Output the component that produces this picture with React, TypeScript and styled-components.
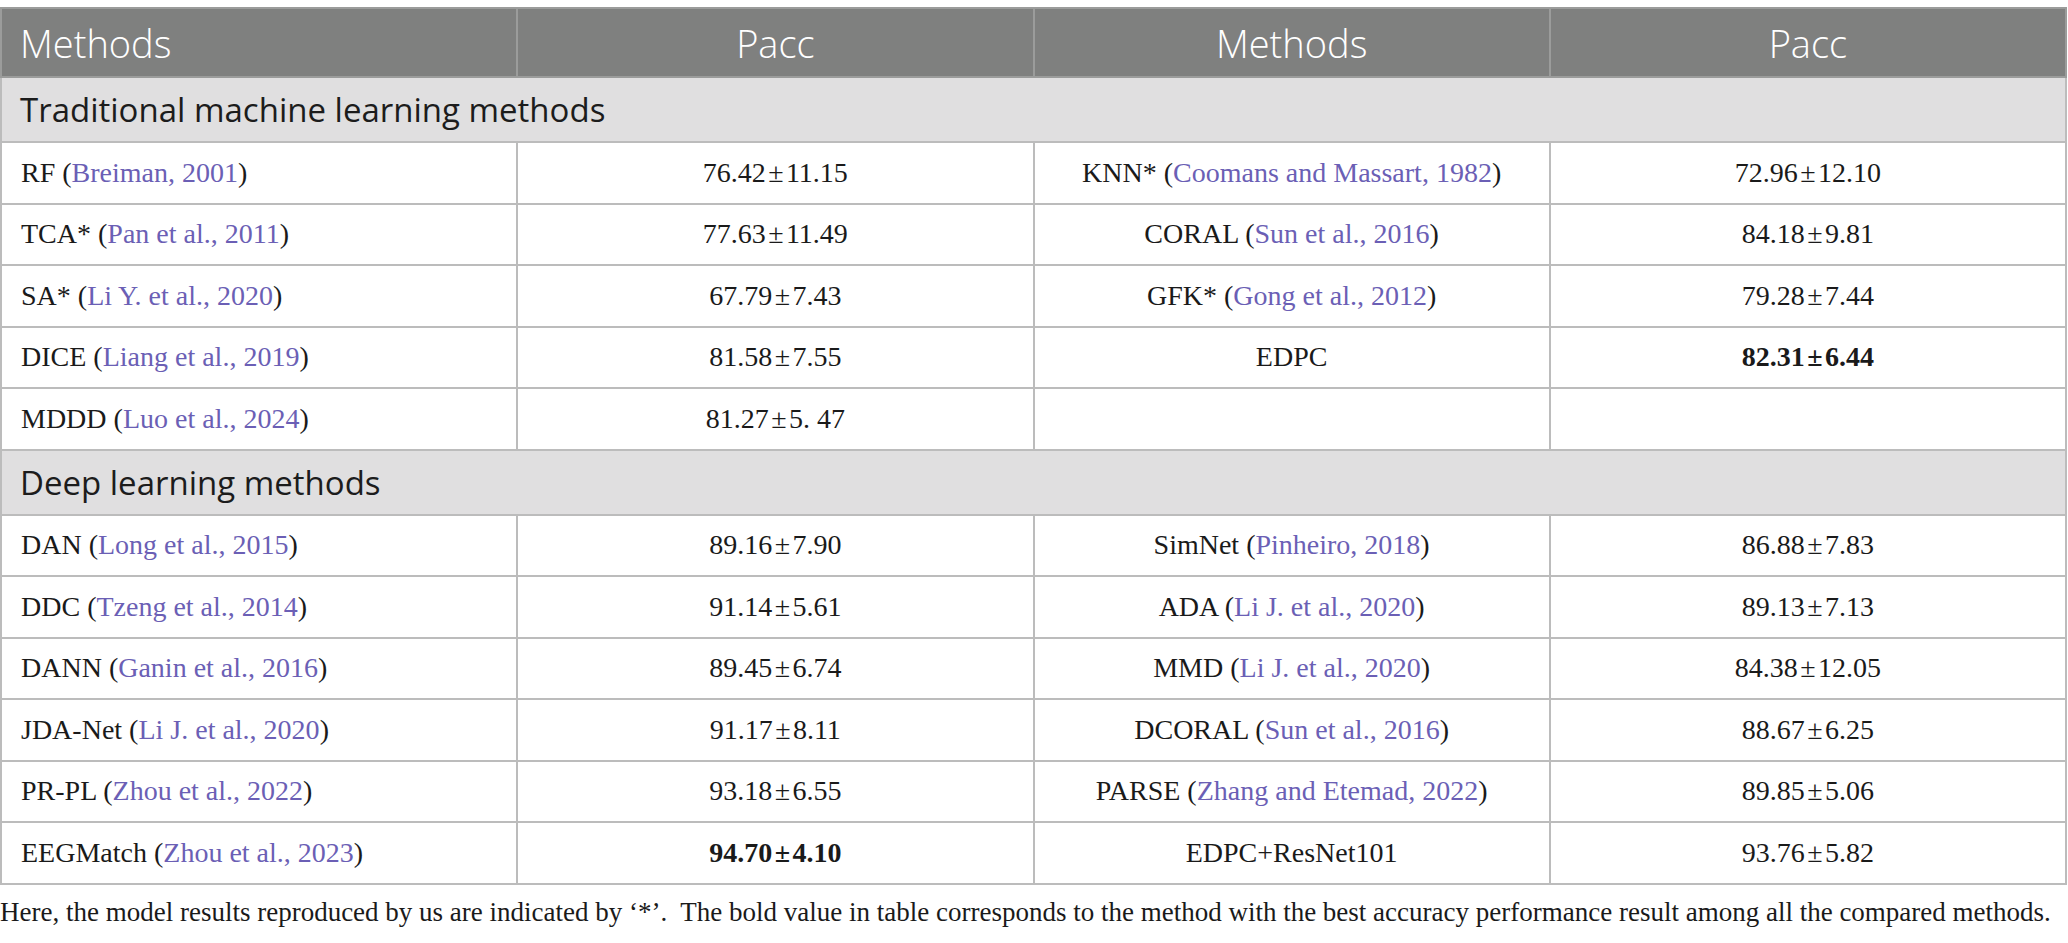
import React from 'react'
import styled, { createGlobalStyle } from 'styled-components'

const GlobalStyle = createGlobalStyle`
  body {
    margin: 0;
    background: #ffffff;
  }
`

const Page = styled.div`
  padding-top: 7px;
  width: 2068px;
`

const Table = styled.table`
  width: 2067px;
  border-collapse: collapse;
  table-layout: fixed;
`

const HeadCell = styled.th<{ $left?: boolean }>`
  height: 67px;
  padding: 0 18px;
  background: #7f807f;
  border: 2px solid #9b9c9b;
  color: #ffffff;
  font-family: 'Open Sans', 'Noto Sans', sans-serif;
  font-weight: 300;
  font-size: 38px;
  text-align: ${(p) => (p.$left ? 'left' : 'center')};
`

const SectionCell = styled.td`
  height: 63px;
  padding: 0 18px;
  background: #e0dfe0;
  border: 2px solid #bcbcbc;
  color: #1c1c1c;
  font-family: 'Open Sans', 'Noto Sans', sans-serif;
  font-size: 33px;
  text-align: left;
`

const Cell = styled.td<{ $left?: boolean; $bold?: boolean }>`
  height: 59.5px;
  padding: 0 19px;
  border: 2px solid #bcbcbc;
  color: #1a1a1a;
  font-family: 'Liberation Serif', serif;
  font-size: 28px;
  font-weight: ${(p) => (p.$bold ? 700 : 400)};
  text-align: ${(p) => (p.$left ? 'left' : 'center')};
  white-space: nowrap;
`

const Ref = styled.span`
  color: #6b5fb5;
`

const Note = styled.p`
  margin: 12px 0 0;
  font-family: 'Liberation Serif', serif;
  font-size: 27px;
  color: #1a1a1a;
  white-space: nowrap;
`

type Method = { name: string; ref?: string }
type Row = { a?: Method; aVal?: string; aBold?: boolean; b?: Method; bVal?: string; bBold?: boolean }

const pm = (x: string, y: string) => `${x}\u200a±\u200a${y}`

const traditional: Row[] = [
  { a: { name: 'RF', ref: 'Breiman, 2001' }, aVal: pm('76.42', '11.15'), b: { name: 'KNN*', ref: 'Coomans and Massart, 1982' }, bVal: pm('72.96', '12.10') },
  { a: { name: 'TCA*', ref: 'Pan et al., 2011' }, aVal: pm('77.63', '11.49'), b: { name: 'CORAL', ref: 'Sun et al., 2016' }, bVal: pm('84.18', '9.81') },
  { a: { name: 'SA*', ref: 'Li Y. et al., 2020' }, aVal: pm('67.79', '7.43'), b: { name: 'GFK*', ref: 'Gong et al., 2012' }, bVal: pm('79.28', '7.44') },
  { a: { name: 'DICE', ref: 'Liang et al., 2019' }, aVal: pm('81.58', '7.55'), b: { name: 'EDPC' }, bVal: pm('82.31', '6.44'), bBold: true },
  { a: { name: 'MDDD', ref: 'Luo et al., 2024' }, aVal: pm('81.27', '5. 47') },
]

const deep: Row[] = [
  { a: { name: 'DAN', ref: 'Long et al., 2015' }, aVal: pm('89.16', '7.90'), b: { name: 'SimNet', ref: 'Pinheiro, 2018' }, bVal: pm('86.88', '7.83') },
  { a: { name: 'DDC', ref: 'Tzeng et al., 2014' }, aVal: pm('91.14', '5.61'), b: { name: 'ADA', ref: 'Li J. et al., 2020' }, bVal: pm('89.13', '7.13') },
  { a: { name: 'DANN', ref: 'Ganin et al., 2016' }, aVal: pm('89.45', '6.74'), b: { name: 'MMD', ref: 'Li J. et al., 2020' }, bVal: pm('84.38', '12.05') },
  { a: { name: 'JDA-Net', ref: 'Li J. et al., 2020' }, aVal: pm('91.17', '8.11'), b: { name: 'DCORAL', ref: 'Sun et al., 2016' }, bVal: pm('88.67', '6.25') },
  { a: { name: 'PR-PL', ref: 'Zhou et al., 2022' }, aVal: pm('93.18', '6.55'), b: { name: 'PARSE', ref: 'Zhang and Etemad, 2022' }, bVal: pm('89.85', '5.06') },
  { a: { name: 'EEGMatch', ref: 'Zhou et al., 2023' }, aVal: pm('94.70', '4.10'), aBold: true, b: { name: 'EDPC+ResNet101' }, bVal: pm('93.76', '5.82') },
]

const MethodText = ({ m }: { m?: Method }) => {
  if (!m) return null
  return (
    <>
      {m.name}
      {m.ref && (
        <>
          {' ('}
          <Ref>{m.ref}</Ref>
          {')'}
        </>
      )}
    </>
  )
}

const DataRow = ({ row }: { row: Row }) => (
  <tr>
    <Cell $left>
      <MethodText m={row.a} />
    </Cell>
    <Cell $bold={row.aBold}>{row.aVal}</Cell>
    <Cell>
      <MethodText m={row.b} />
    </Cell>
    <Cell $bold={row.bBold}>{row.bVal}</Cell>
  </tr>
)

const App = () => (
  <Page>
    <GlobalStyle />
    <Table>
      <thead>
        <tr>
          <HeadCell $left>Methods</HeadCell>
          <HeadCell>Pacc</HeadCell>
          <HeadCell>Methods</HeadCell>
          <HeadCell>Pacc</HeadCell>
        </tr>
      </thead>
      <tbody>
        <tr>
          <SectionCell colSpan={4}>Traditional machine learning methods</SectionCell>
        </tr>
        {traditional.map((r, i) => (
          <DataRow key={i} row={r} />
        ))}
        <tr>
          <SectionCell colSpan={4}>Deep learning methods</SectionCell>
        </tr>
        {deep.map((r, i) => (
          <DataRow key={i} row={r} />
        ))}
      </tbody>
    </Table>
    <Note>
      Here, the model results reproduced by us are indicated by ‘*’.&nbsp; The bold value in table corresponds to the method
      with the best accuracy performance result among all the compared methods.
    </Note>
  </Page>
)

export default App
